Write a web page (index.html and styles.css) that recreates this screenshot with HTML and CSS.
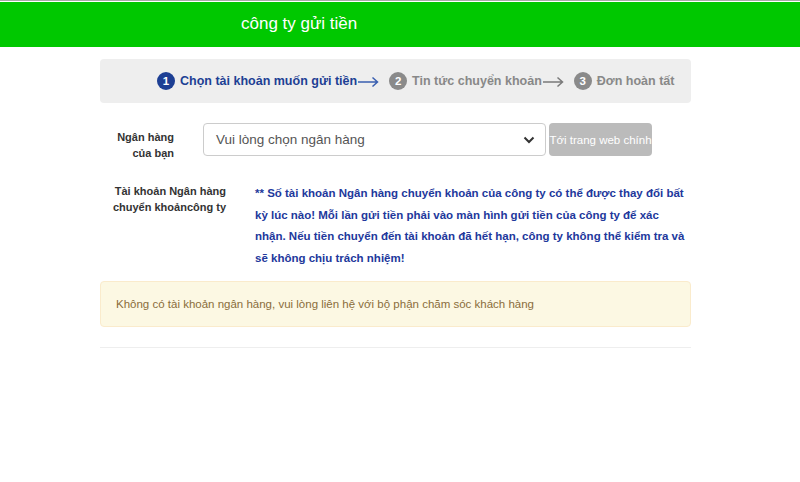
FILE: index.html
```html
<!DOCTYPE html>
<html lang="vi">
<head>
<meta charset="utf-8">
<title>công ty gửi tiền</title>
<link rel="stylesheet" href="styles.css">
</head>
<body>
<div class="topline"></div>
<header class="header">
  <h1 class="title">công ty gửi tiền</h1>
</header>
<main class="container">
  <div class="steps">
    <div class="step active"><span class="num">1</span><span class="label">Chọn tài khoản muốn gửi tiền</span>
      <svg class="arrow" width="21" height="12" viewBox="0 0 21 12"><path d="M0 6H19.5M14.5 1.5L19.5 6L14.5 10.5" fill="none" stroke="currentColor" stroke-width="1.5"/></svg></div>
    <div class="step"><span class="num">2</span><span class="label">Tin tức chuyển khoản</span>
      <svg class="arrow" width="21" height="12" viewBox="0 0 21 12"><path d="M0 6H19.5M14.5 1.5L19.5 6L14.5 10.5" fill="none" stroke="currentColor" stroke-width="1.5"/></svg></div>
    <div class="step"><span class="num">3</span><span class="label">Đơn hoàn tất</span></div>
  </div>

  <div class="row row-bank">
    <label class="lbl lbl-bank">Ngân hàng<br>của bạn</label>
    <div class="select">
      <span>Vui lòng chọn ngân hàng</span>
      <svg class="chev" width="12" height="8" viewBox="0 0 12 8"><path d="M1.5 1.5L6 6L10.5 1.5" fill="none" stroke="#333" stroke-width="2"/></svg>
    </div>
    <button class="btn">Tới trang web chính</button>
  </div>

  <div class="row row-acc">
    <div class="lbl lbl-acc">Tài khoản Ngân hàng<br>chuyển khoảncông ty</div>
    <p class="notice">** Số tài khoản Ngân hàng chuyển khoản của công ty có thể được thay đổi bất kỳ lúc nào! Mỗi lần gửi tiền phải vào màn hình gửi tiền của công ty để xác nhận. Nếu tiền chuyển đến tài khoản đã hết hạn, công ty không thể kiểm tra và sẽ không chịu trách nhiệm!</p>
  </div>

  <div class="alert">Không có tài khoản ngân hàng, vui lòng liên hệ với bộ phận chăm sóc khách hàng</div>
  <hr class="sep">
</main>
</body>
</html>
```
FILE: styles.css
```css
* { box-sizing: border-box; }
html, body { margin: 0; padding: 0; background: #fff; }
body { font-family: "Liberation Sans", Arial, sans-serif; color: #333; }

.topline { height: 2px; border-top: 1px solid #a9a9a9; background: #fff; }
.header { background: #00c800; height: 45px; display: flex; align-items: center; }
.title { margin: 0 0 0 241px; font-size: 17px; font-weight: normal; color: #fff; line-height: 1; padding-bottom: 2px; }

.container { width: 591px; margin: 12px 0 0 100px; }

.steps { background: #eeeeee; border-radius: 4px; height: 44px; display: flex; align-items: center; padding-left: 57px; white-space: nowrap; }
.step { display: flex; align-items: center; color: #888; font-size: 12.5px; font-weight: bold; }
.step .num { width: 18px; height: 18px; border-radius: 50%; background: #8a8a8a; color: #fff; font-size: 11.5px; display: flex; align-items: center; justify-content: center; margin-right: 5px; flex: none; }
.step.active { color: #1d3f94; }
.step.active .num { background: #1d3f94; }
.step .arrow { margin: 1px 10px 0 1px; color: #7a7a7a; flex: none; }
.step.active .arrow { color: #3a5fb0; }

.row { display: flex; }
.row-bank { margin-top: 20px; align-items: flex-start; }
.lbl { font-size: 11px; font-weight: bold; color: #333; text-align: right; line-height: 16px; white-space: nowrap; }
.lbl-bank { width: 74px; padding-top: 6px; }
.select { margin-left: 29px; width: 343px; height: 33px; border: 1px solid #ccc; border-radius: 4px; display: flex; align-items: center; justify-content: space-between; padding: 0 10px 0 12px; font-size: 13.5px; color: #555; }
.chev { margin-top: 1px; }
.btn { margin-left: 3px; width: 103px; height: 33px; border: 0; border-radius: 4px; background: #bbbbbb; color: #fff; font-family: "Liberation Sans", Arial, sans-serif; font-size: 11.5px; padding: 0; white-space: nowrap; overflow: hidden; }

.row-acc { margin-top: 22px; }
.lbl-acc { width: 126px; padding-top: 0; }
.notice { margin: 0 0 0 29px; width: 434px; font-size: 11.5px; font-weight: bold; color: #22389c; line-height: 21.5px; }

.alert { margin-top: 12px; height: 46px; background: #fcf8e3; border: 1px solid #faebcc; border-radius: 4px; color: #8a6d3b; font-size: 11.5px; display: flex; align-items: center; padding-left: 15px; }
.sep { margin: 20px 0 0; border: 0; border-top: 1px solid #eee; }
```
